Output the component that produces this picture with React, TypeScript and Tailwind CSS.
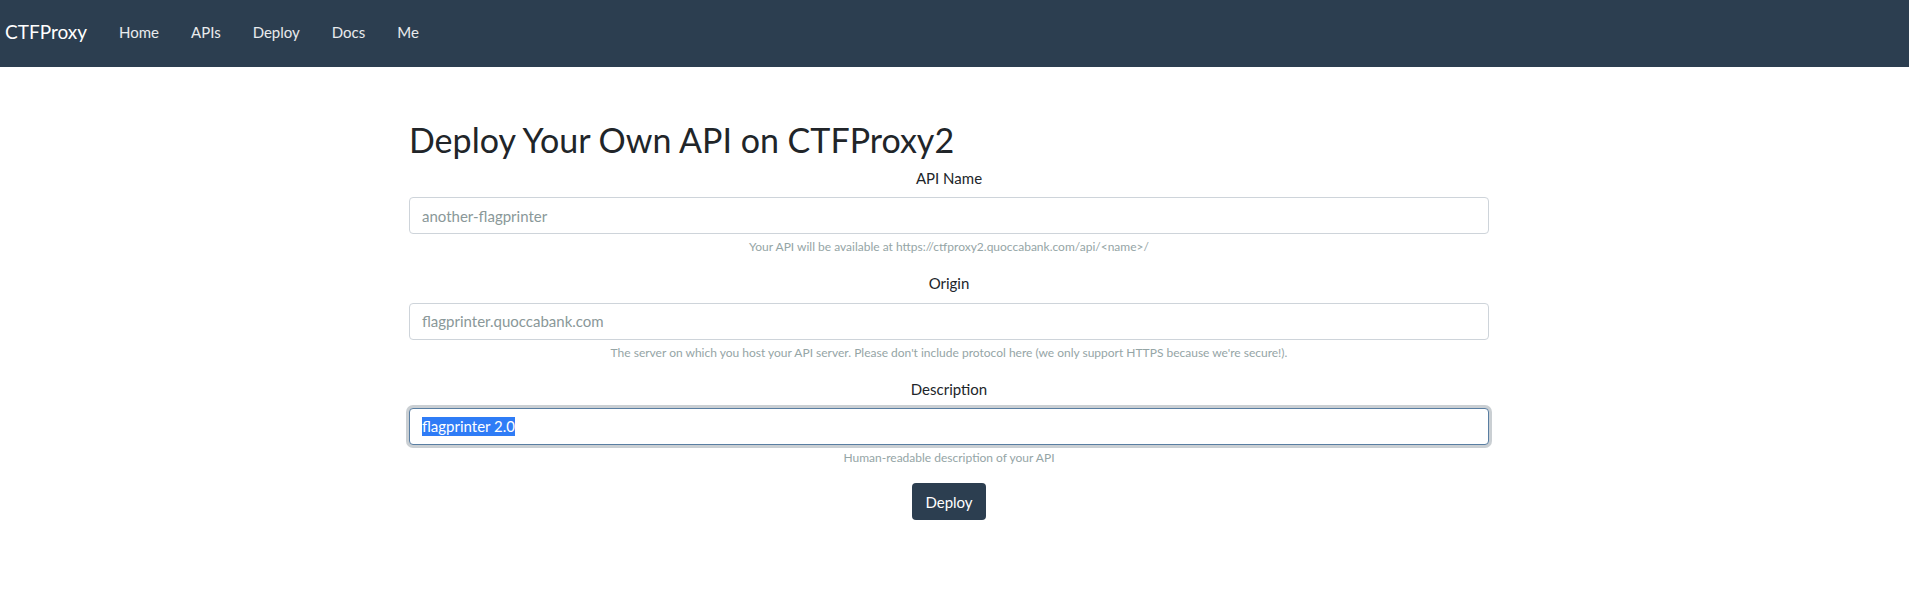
import React from "react";

const navItems = ["Home", "APIs", "Deploy", "Docs", "Me"];

type FieldProps = {
  label: string;
  placeholder?: string;
  value?: string;
  help: string;
  focused?: boolean;
};

const Field = ({ label, placeholder, value, help, focused }: FieldProps) => {
  return (
    <div className="mb-4 text-center">
      <label className="mb-2 block text-[15px] leading-[22.5px] text-[#212529]">{label}</label>
      {focused ? (
        <div className="flex h-[37px] items-center rounded-[4px] border border-[#597ea2] bg-white px-[12px] text-left shadow-[0_0_0_3px_rgba(44,62,80,0.25)]">
          <span className="bg-[#2f7cf6] text-[15px] leading-[19px] text-white">{value}</span>
        </div>
      ) : (
        <div className="flex h-[37px] items-center rounded-[4px] border border-[#ced4da] bg-white px-[12px] text-left">
          <span className="text-[15px] text-[#8a9899]">{placeholder}</span>
        </div>
      )}
      <small className="mt-1 block text-[12px] leading-[18px] text-[#95a5a6]">{help}</small>
    </div>
  );
};

export default function App() {
  return (
    <div className="min-h-[591px] bg-white font-['Lato','Liberation_Sans',sans-serif] text-[#212529]">
      <nav className="flex h-[67px] items-center bg-[#2c3e50] pb-[2px] pl-[5px]">
        <span className="mr-4 text-[19px] text-white">CTFProxy</span>
        <ul className="flex">
          {navItems.map((item) => (
            <li key={item} className="px-4 text-[15px] text-white/90">
              {item}
            </li>
          ))}
        </ul>
      </nav>

      <main className="ml-[409px] w-[1080px] pt-[53px]">
        <h1 className="mb-[6px] text-[34px] leading-[1.2] font-normal text-[#212529]">Deploy Your Own API on CTFProxy2</h1>
        <Field
          label="API Name"
          placeholder="another-flagprinter"
          help="Your API will be available at https://ctfproxy2.quoccabank.com/api/<name>/"
        />
        <Field
          label="Origin"
          placeholder="flagprinter.quoccabank.com"
          help="The server on which you host your API server. Please don't include protocol here (we only support HTTPS because we're secure!)."
        />
        <Field
          label="Description"
          value="flagprinter 2.0"
          help="Human-readable description of your API"
          focused
        />
        <div className="flex justify-center">
          <button className="h-[37px] rounded-[4px] bg-[#2c3e50] px-[13px] text-[15px] text-white">Deploy</button>
        </div>
      </main>
    </div>
  );
}
